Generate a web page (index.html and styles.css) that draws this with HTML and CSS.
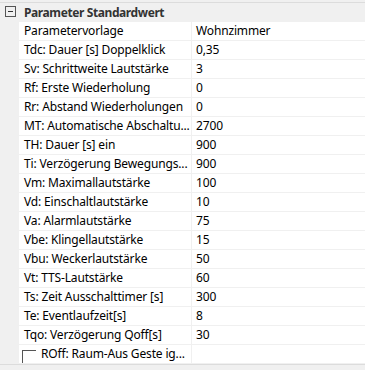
FILE: index.html
```html
<!DOCTYPE HTML>
<html>
  <head>
    <meta http-equiv="content-type" content="text/html; charset=utf-8">
    <title>Parameter</title>
    <link rel="stylesheet" href="styles.css">
  </head>
  <body>
    <div class="grid">
      <div class="topline"></div>
      <div class="category">
        <span class="toggle"><span class="minus"></span></span>
        <span class="cat-name">Parameter Standardwert</span>
      </div>
      <ul class="props">
        <li><span class="name">Parametervorlage</span><span class="value">Wohnzimmer</span></li>
        <li><span class="name">Tdc: Dauer [s] Doppelklick</span><span class="value">0,35</span></li>
        <li><span class="name">Sv: Schrittweite Lautstärke</span><span class="value">3</span></li>
        <li><span class="name">Rf: Erste Wiederholung</span><span class="value">0</span></li>
        <li><span class="name">Rr: Abstand Wiederholungen</span><span class="value">0</span></li>
        <li><span class="name">MT: Automatische Abschaltu...</span><span class="value">2700</span></li>
        <li><span class="name">TH: Dauer [s] ein</span><span class="value">900</span></li>
        <li><span class="name">Ti: Verzögerung Bewegungs...</span><span class="value">900</span></li>
        <li><span class="name">Vm: Maximallautstärke</span><span class="value">100</span></li>
        <li><span class="name">Vd: Einschaltlautstärke</span><span class="value">10</span></li>
        <li><span class="name">Va: Alarmlautstärke</span><span class="value">75</span></li>
        <li><span class="name">Vbe: Klingellautstärke</span><span class="value">15</span></li>
        <li><span class="name">Vbu: Weckerlautstärke</span><span class="value">50</span></li>
        <li><span class="name">Vt: TTS-Lautstärke</span><span class="value">60</span></li>
        <li><span class="name">Ts: Zeit Ausschalttimer [s]</span><span class="value">300</span></li>
        <li><span class="name">Te: Eventlaufzeit[s]</span><span class="value">8</span></li>
        <li><span class="name">Tqo: Verzögerung Qoff[s]</span><span class="value">30</span></li>
        <li class="check-row"><span class="name"><span class="checkbox"></span>ROff: Raum-Aus Geste ig...</span><span class="value"></span></li>
      </ul>
      <div class="bottom"></div>
    </div>
  </body>
</html>
```
FILE: styles.css
```css
body{margin:0px; padding:0px; font-family:"Noto Sans", "Open Sans", sans-serif; font-size:12px; letter-spacing:-0.15px; background:#f0f0f0; color:#000;}
.grid{width:365px; height:370px; overflow:hidden; background:#f0f0f0;}
.topline{height:2px; border-bottom:1px solid #dcdcdc;}
.category{height:18px; display:flex; align-items:center;}
.toggle{width:19px; height:18px; display:flex; align-items:center; justify-content:center;}
.minus{width:9px; height:9px; border:1px solid #555; position:relative; margin-top:-2px; margin-left:1px;}
.minus::after{content:""; position:absolute; left:2px; right:2px; top:4px; height:1px; background:#333;}
.cat-name{font-weight:bold; color:#333; padding-left:5px; letter-spacing:-0.4px;}
.props{margin:0px; padding:0px 0px 0px 19px; list-style-type:none; border-top:1px solid #f0f0f0;}
.props li{display:flex; height:18px; border-bottom:1px solid #f0f0f0; background:#fff; line-height:18px;}
.name{width:167px; padding-left:5px; border-right:1px solid #f0f0f0; white-space:nowrap; overflow:hidden; display:flex; align-items:center;}
.value{flex:1; padding-left:4px; white-space:nowrap; overflow:hidden;}
.checkbox{width:13px; height:14px; border-top:1px solid #555; border-left:1px solid #555; margin-left:-2px; margin-right:5px; margin-top:6px; flex:none;}
.bottom{height:7px; border-top:1px solid #dcdcdc;}
```
